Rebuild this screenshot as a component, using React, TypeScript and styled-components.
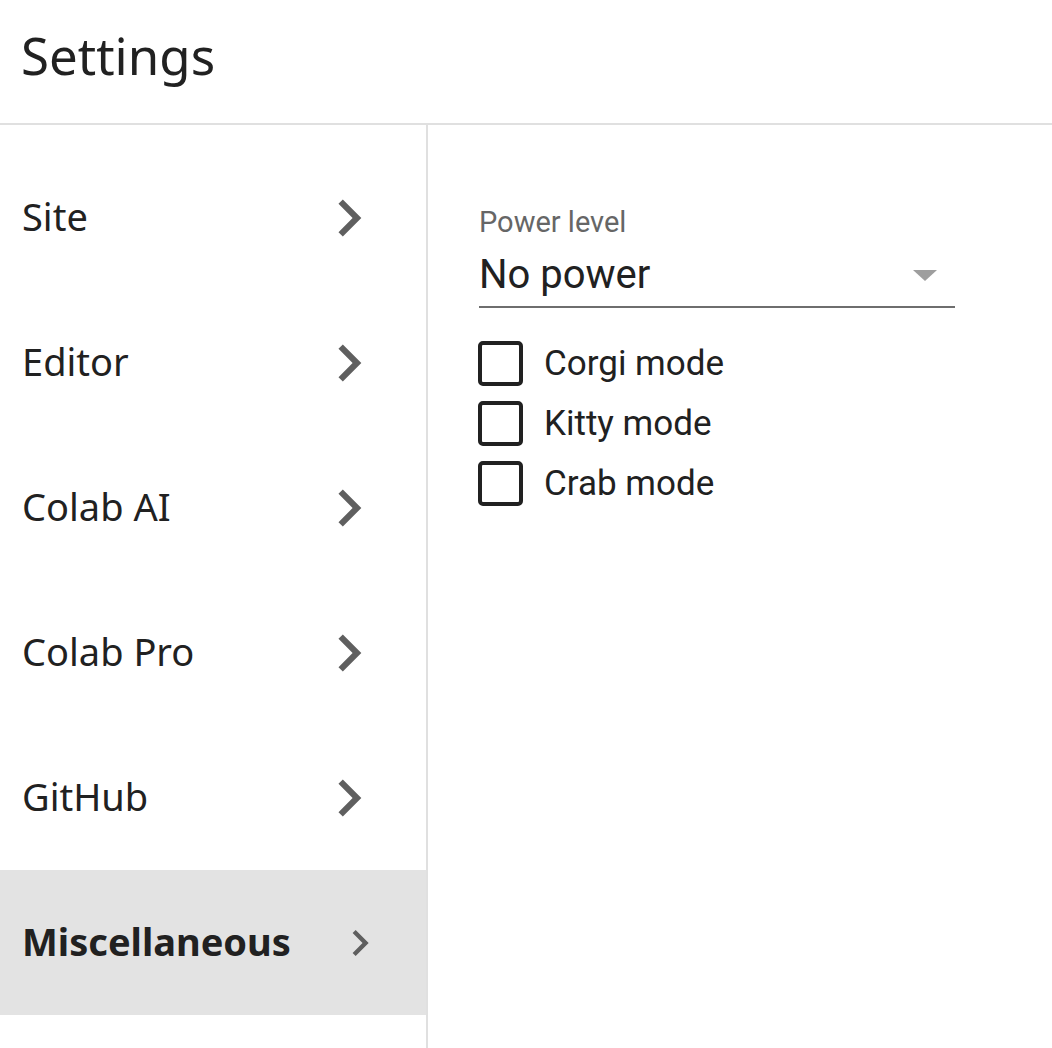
import React from "react";
import styled, { createGlobalStyle } from "styled-components";

const GlobalStyle = createGlobalStyle`
  html, body { margin: 0; padding: 0; background: #ffffff; }
  body { font-family: "Noto Sans", Roboto, sans-serif; color: #212121; }
  #root { min-height: 100vh; }
`;

const Page = styled.div`
  display: flex;
  flex-direction: column;
  min-height: 100vh;
`;

const Header = styled.header`
  display: flex;
  align-items: center;
  padding-left: 21px;
  border-bottom: 2px solid #e0e0e0;
  box-sizing: border-box;
  height: 125px;
`;

const Title = styled.h1`
  margin: 0;
  font-family: "Noto Sans", sans-serif;
  font-weight: 400;
  font-size: 51px;
  color: #212121;
  line-height: 1;
  padding-bottom: 12px;
`;

const Body = styled.div`
  flex: 1;
  display: flex;
`;

const Nav = styled.nav`
  width: 426px;
  border-right: 2px solid #e0e0e0;
  padding-top: 20px;
  display: flex;
  flex-direction: column;
`;

const NavItem = styled.div<{ $active?: boolean }>`
  height: 145px;
  display: flex;
  align-items: center;
  justify-content: space-between;
  padding-left: 22px;
  padding-right: 40px;
  background: ${(p) => (p.$active ? "#e3e3e3" : "transparent")};
  font-family: "Noto Sans", sans-serif;
  font-size: 38px;
  font-weight: ${(p) => (p.$active ? 700 : 400)};
  color: #212121;
`;

const NavText = styled.span`
  padding-bottom: 4px;
`;

const ChevronBox = styled.svg<{ $size: number }>`
  width: ${(p) => p.$size}px;
  height: ${(p) => p.$size}px;
  fill: #5f5f5f;
  flex-shrink: 0;
`;

const Main = styled.main`
  flex: 1;
  padding: 81px 0 0 51px;
`;

const Field = styled.div`
  width: 476px;
  display: flex;
  flex-direction: column;
`;

const Label = styled.label`
  font-family: Roboto, sans-serif;
  font-size: 29px;
  line-height: 32px;
  color: #666666;
`;

const Select = styled.div`
  margin-top: 13px;
  height: 48px;
  padding-bottom: 7px;
  border-bottom: 2px solid #6e6e6e;
  display: flex;
  align-items: center;
  justify-content: space-between;
  font-family: Roboto, sans-serif;
  font-size: 40px;
  line-height: 48px;
  color: #212121;
`;

const Caret = styled.span`
  width: 0;
  height: 0;
  margin-right: 18px;
  border-left: 12px solid transparent;
  border-right: 12px solid transparent;
  border-top: 11px solid #9e9e9e;
`;

const Checks = styled.div`
  margin-top: 25px;
  display: flex;
  flex-direction: column;
`;

const CheckRow = styled.label`
  height: 60px;
  display: flex;
  align-items: center;
  gap: 21px;
  font-family: Roboto, sans-serif;
  font-size: 35px;
  color: #212121;
`;

const Box = styled.span`
  width: 45px;
  height: 45px;
  margin-left: -1px;
  box-sizing: border-box;
  border: 4.5px solid #212121;
  border-radius: 5px;
  flex-shrink: 0;
`;

const Chevron = ({ size }: { size: number }) => (
  <ChevronBox $size={size} viewBox="0 0 24 24">
    <path d="M10 6L8.59 7.41 13.17 12l-4.58 4.59L10 18l6-6z" />
  </ChevronBox>
);

const items = ["Site", "Editor", "Colab AI", "Colab Pro", "GitHub", "Miscellaneous"];

export default function App() {
  return (
    <>
      <GlobalStyle />
      <Page>
        <Header>
          <Title>Settings</Title>
        </Header>
        <Body>
          <Nav>
            {items.map((it) => {
              const active = it === "Miscellaneous";
              return (
                <NavItem key={it} $active={active}>
                  <NavText>{it}</NavText>
                  <Chevron size={active ? 52 : 74} />
                </NavItem>
              );
            })}
          </Nav>
          <Main>
            <Field>
              <Label>Power level</Label>
              <Select>
                <span>No power</span>
                <Caret />
              </Select>
            </Field>
            <Checks>
              {["Corgi mode", "Kitty mode", "Crab mode"].map((c) => (
                <CheckRow key={c}>
                  <Box />
                  <span>{c}</span>
                </CheckRow>
              ))}
            </Checks>
          </Main>
        </Body>
      </Page>
    </>
  );
}
